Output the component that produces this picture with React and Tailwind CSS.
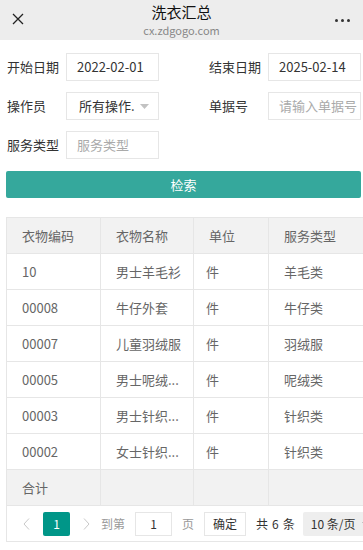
const rows = [
  ['10', '男士羊毛衫', '件', '羊毛类'],
  ['00008', '牛仔外套', '件', '牛仔类'],
  ['00007', '儿童羽绒服', '件', '羽绒服'],
  ['00005', '男士呢绒...', '件', '呢绒类'],
  ['00003', '男士针织...', '件', '针织类'],
  ['00002', '女士针织...', '件', '针织类'],
];

function Field({ label, children }) {
  return (
    <div className="flex items-center">
      <span className="w-[59px] shrink-0 text-[13px] text-[#333]">{label}</span>
      {children}
    </div>
  );
}

function Box({ children, placeholder }) {
  return (
    <div className={`flex h-[28px] w-[93px] items-center border border-[#e6e6e6] bg-white pl-[10px] text-[13px] ${placeholder ? 'text-[#aaa]' : 'text-[#333]'}`}>
      {children}
    </div>
  );
}

export default function App() {
  return (
    <div className="h-[550px] w-[363px] overflow-hidden bg-white" style={{ fontFamily: '"Noto Sans CJK SC", "Noto Sans", sans-serif' }}>
      {/* top bar */}
      <div className="relative flex h-[40px] flex-col items-center bg-[#ededed]">
        <svg className="absolute left-[12px] top-[13px]" width="12" height="12" viewBox="0 0 12 12">
          <path d="M1 1 L11 11 M11 1 L1 11" stroke="#222" strokeWidth="1.3" />
        </svg>
        <div className="mt-[1px] text-[15px] leading-[22px] text-[#111]">洗衣汇总</div>
        <div className="text-[11px] leading-[14px] text-[#888]">cx.zdgogo.com</div>
        <div className="absolute right-[13px] top-[19px] flex gap-[3px]">
          <span className="h-[3px] w-[3px] rounded-full bg-[#333]" />
          <span className="h-[3px] w-[3px] rounded-full bg-[#333]" />
          <span className="h-[3px] w-[3px] rounded-full bg-[#333]" />
        </div>
      </div>

      {/* filters */}
      <div className="flex flex-col gap-[11px] pl-[7px] pr-[2px] pt-[13px]">
        <div className="flex justify-between">
          <Field label="开始日期"><Box>2022-02-01</Box></Field>
          <Field label="结束日期"><Box>2025-02-14</Box></Field>
        </div>
        <div className="flex justify-between">
          <Field label="操作员">
            <Box>
              <span className="flex-1 pl-[2px]">所有操作.</span>
              <svg className="mr-[9px]" width="9" height="5" viewBox="0 0 9 5">
                <path d="M0 0 L9 0 L4.5 5 Z" fill="#c2c2c2" />
              </svg>
            </Box>
          </Field>
          <Field label="单据号"><Box placeholder>请输入单据号</Box></Field>
        </div>
        <div className="flex">
          <Field label="服务类型"><Box placeholder>服务类型</Box></Field>
        </div>
      </div>

      <div className="ml-[6px] mr-[2px] mt-[12px] flex h-[27px] items-center justify-center rounded-[2px] bg-[#35a89c] text-[13px] text-white">
        检索
      </div>

      {/* table */}
      <div className="ml-[6px] mt-[19px] overflow-hidden">
        <table className="w-[360px] table-fixed border-collapse text-left text-[13px] text-[#666]">
          <colgroup>
            <col className="w-[94px]" />
            <col className="w-[93px]" />
            <col className="w-[75px]" />
            <col />
          </colgroup>
          <thead>
            <tr className="h-[36px] bg-[#f2f2f2]">
              {['衣物编码', '衣物名称', '单位', '服务类型'].map((h) => (
                <th key={h} className="border border-[#e6e6e6] pl-[15px] font-normal">{h}</th>
              ))}
            </tr>
          </thead>
          <tbody>
            {rows.map((r) => (
              <tr key={r[0]} className="h-[36px]">
                {r.map((c, i) => (
                  <td key={i} className={`border border-[#e6e6e6] ${i === 2 ? 'pl-[12px]' : 'pl-[15px]'}`}>{c}</td>
                ))}
              </tr>
            ))}
            <tr className="h-[36px] bg-[#f2f2f2]">
              <td className="border border-[#e6e6e6] pl-[15px]">合计</td>
              <td className="border border-[#e6e6e6]" />
              <td className="border border-[#e6e6e6]" />
              <td className="border border-[#e6e6e6]" />
            </tr>
          </tbody>
        </table>

        {/* pagination */}
        <div className="flex h-[36px] w-[420px] items-center border-b border-l border-[#e6e6e6] text-[12px]">
          <svg className="ml-[16px]" width="7" height="12" viewBox="0 0 7 12">
            <path d="M6 0.5 L1 6 L6 11.5" fill="none" stroke="#c8c8c8" strokeWidth="1" />
          </svg>
          <div className="ml-[13px] flex h-[24px] w-[27px] items-center justify-center rounded-[2px] bg-[#009688] text-white">1</div>
          <svg className="ml-[13px]" width="7" height="12" viewBox="0 0 7 12">
            <path d="M1 0.5 L6 6 L1 11.5" fill="none" stroke="#c8c8c8" strokeWidth="1" />
          </svg>
          <span className="ml-[11px] text-[#999]">到第</span>
          <div className="ml-[10px] flex h-[24px] w-[37px] items-center justify-center border border-[#e6e6e6] text-[#333]">1</div>
          <span className="ml-[10px] text-[#999]">页</span>
          <div className="ml-[10px] flex h-[24px] w-[42px] items-center justify-center border border-[#e6e6e6] text-[#333]">确定</div>
          <span className="ml-[10px] flex gap-[4px] text-[#333]">
            <span>共</span><span>6</span><span>条</span>
          </span>
          <div className="ml-[8px] flex h-[24px] w-[80px] items-center rounded-[2px] bg-[#eeeeee] pl-[8px] text-[#333]">
            <span>10 条/页</span>
            <svg className="ml-[7px]" width="7" height="4" viewBox="0 0 7 4">
              <path d="M0.5 0.5 L3.5 3.5 L6.5 0.5" fill="none" stroke="#999" strokeWidth="1" />
            </svg>
          </div>
        </div>
      </div>
    </div>
  );
}
